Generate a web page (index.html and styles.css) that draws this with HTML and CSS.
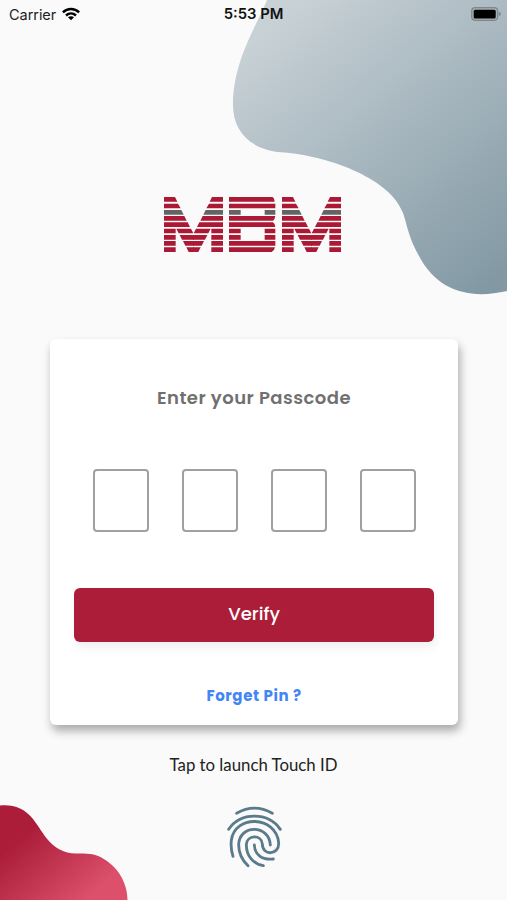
FILE: index.html
```html
<!DOCTYPE html>
<html lang="en">
<head>
<meta charset="utf-8">
<title>MBM Passcode</title>
<link rel="stylesheet" href="styles.css">
</head>
<body>
<main class="screen">
  <svg class="blob blob-top" viewBox="0 0 287 310" aria-hidden="true">
    <defs><linearGradient id="steel" gradientUnits="userSpaceOnUse" x1="20" y1="50" x2="240" y2="310"><stop offset="0" stop-color="#c8d1d6"/><stop offset="1" stop-color="#8299a4"/></linearGradient></defs>
    <path fill="url(#steel)" d="M47 0C36 27 13 61 13 105C13 130 29 151 65 152.500C113 157 171 180 183 213C187 224 188 236 199 256C217 290 248 300 287 291V0Z"/>
  </svg>
  <svg class="blob blob-bottom" viewBox="0 0 140 105" aria-hidden="true">
    <defs><linearGradient id="rose" gradientUnits="userSpaceOnUse" x1="22" y1="42" x2="80" y2="110"><stop offset="0" stop-color="#ab1d38"/><stop offset="1" stop-color="#dc506c"/></linearGradient></defs>
    <path fill="url(#rose)" d="M0 10.500C14 9.500 24 13 33 24C44 38 51 58 76 58.500C88 58.500 96 58 107 66C120 75 127.500 90 127.500 105H0Z"/>
  </svg>

  <header class="status">
    <div class="carrier"><span>Carrier</span>
      <svg class="wifi" viewBox="0 0 18 14" aria-hidden="true"><g fill="none" stroke="#000" stroke-width="2.500"><path d="M.9 5.300C5.500.8 12.500.8 17.100 5.300"/><path d="M4 8.500C6.900 5.800 11.100 5.800 14 8.500"/></g><path d="M9 13.300L6 10.300C7.700 8.900 10.300 8.900 12 10.300Z"/></svg>
    </div>
    <div class="time">5:53 PM</div>
    <svg class="battery" viewBox="0 0 30 14" aria-hidden="true"><rect x=".7" y=".7" width="26" height="12.600" rx="3.500" fill="#a5afb4" stroke="#7e878b" stroke-width="1.200"/><rect x="2.700" y="2.700" width="22" height="8.800" rx="1.500"/><path d="M27.800 4.800C30.500 5.500 30.500 8.500 27.800 9.200Z" fill="#7e878b"/></svg>
  </header>

  <svg class="logo" viewBox="24 18 537 171" role="img" aria-label="MBM">
    <defs>
      <g id="half">
        <path class="red" d="M27 21H60L67 35H27ZM27 41H69L77 55H27ZM27 78H88L95 92H27ZM27 97H98L105 111H27ZM27 116H62V130H27ZM27 135H62V149H27ZM27 153H62V167H27ZM27 172H62V186H27ZM64 116H108L115 130H71ZM74 135H117V149H81ZM84 153H117V167H91ZM94 172H117V186H101Z"/>
        <path class="gray" d="M27 60H79L86 74H27Z"/>
      </g>
      <g id="bars"><use href="#half"/><use href="#half" transform="matrix(-1 0 0 1 231 0)"/></g>
    </defs>
    <use href="#bars"/><use href="#bars" x="354"/>
    <path class="red" d="M222 21H352Q357 22 359 35H222ZM222 41H361V55H222ZM222 78H361Q360 87 354 92H222ZM222 97H354Q360 101 361 111H222ZM222 116H257V130H222ZM329 116H361V130H329ZM222 135H257V149H222ZM329 135H361V149H329ZM222 153H361V167H222ZM222 172H360Q358 183 350 186H222Z"/>
    <path class="gray" d="M222 60H257V74H222ZM329 60H361V74H329Z"/>
  </svg>

  <section class="card">
    <h1 class="title">Enter your Passcode</h1>
    <div class="pins"><span class="pin"></span><span class="pin"></span><span class="pin"></span><span class="pin"></span></div>
    <button class="verify">Verify</button>
    <a class="forget">Forget Pin ?</a>
  </section>

  <p class="touch">Tap to launch Touch ID</p>
  <svg class="finger" viewBox="0 0 210 225" aria-hidden="true">
    <path d="M50 40Q103 9 157 40M26 88C61 35 145 35 181 88M39 169C32 147 33 130 34 121C44 43 168 46 176 128C178 167 127 168 127 132C125 103 80 104 79 134C79 167 99 192 130 197M84 197C63 177 56 157 56 134C58 72 148 73 151 135M103 135C104 164 126 181 160 177"/>
  </svg>
</main>
</body>
</html>
```
FILE: styles.css
```css
* { box-sizing: border-box; }
body { margin: 0; background: #fafafa; }
.screen {
  position: relative;
  display: flex;
  flex-direction: column;
  align-items: center;
  width: 507px;
  height: 900px;
  overflow: hidden;
  background: #fafafa;
}
.screen > * { flex-shrink: 0; }
.blob { position: absolute; }
.blob-top { top: 0; right: 0; width: 287px; height: 310px; }
.blob-bottom { bottom: 0; left: 0; width: 140px; height: 105px; }
.status {
  position: relative;
  display: grid;
  grid-template-columns: 1fr auto 1fr;
  align-items: center;
  width: 100%;
  height: 27px;
  padding: 0 6px 0 9px;
  font: 14.5px/27px Inter, sans-serif;
  color: #222;
}
.carrier { display: flex; align-items: center; gap: 6px; }
.carrier span { letter-spacing: -.05px; }
.wifi { width: 18px; height: 14px; }
.time { margin-right: 3px; padding-top: 1px; font-weight: 600; font-size: 14.8px; color: #111; }
.battery { width: 30px; height: 14px; justify-self: end; }
.logo { position: relative; width: 179px; height: 57px; margin: 169px 3px 0 0; }
.red { fill: #ab1935; }
.gray { fill: #646464; }
.card {
  position: relative;
  display: flex;
  flex-direction: column;
  align-items: center;
  width: 408px;
  height: 386px;
  margin-top: 86px;
  margin-left: 1px;
  padding-top: 45px;
  border-radius: 6px;
  background: #fff;
  box-shadow: 2px 6px 10px rgba(0, 0, 0, .32);
  font-family: Poppins, "Open Sans", sans-serif;
}
.title { margin: 0; font-size: 18px; line-height: 27px; font-weight: 600; letter-spacing: .45px; color: #707070; white-space: nowrap; }
.pins { display: flex; gap: 33px; margin-top: 58px; }
.pin { width: 56px; height: 63px; border: 2px solid #a0a0a0; border-radius: 4px; }
.verify {
  display: flex;
  align-items: center;
  justify-content: center;
  width: 360px;
  height: 54px;
  margin-top: 56px;
  padding: 0 0 3px;
  border: 0;
  border-radius: 6px;
  background: #ab1d38;
  box-shadow: 2px 6px 8px rgba(0, 0, 0, .06);
  color: #fff;
  font: 500 18px/27px Poppins, "Open Sans", sans-serif;
}
.forget { margin-top: 42px; font-size: 15px; line-height: 24px; font-weight: 700; letter-spacing: .6px; color: #4285f4; white-space: nowrap; }
.touch { margin: 28px 0 0; font: 16.8px/24px Lato, sans-serif; color: #222; white-space: nowrap; }
.finger { width: 70px; height: 75px; margin: 23px 0 0 3px; fill: none; stroke: #5a7b8c; stroke-width: 8.5; stroke-linecap: round; stroke-linejoin: round; }
```
